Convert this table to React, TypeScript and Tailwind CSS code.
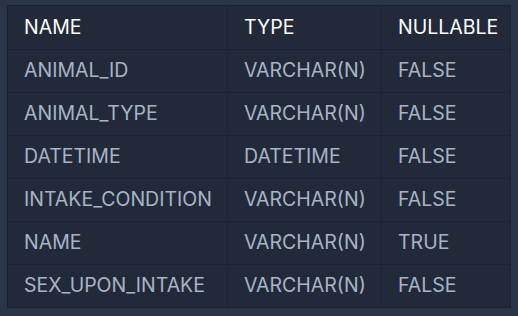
const columns = ['NAME', 'TYPE', 'NULLABLE']

const rows: [string, string, string][] = [
  ['ANIMAL_ID', 'VARCHAR(N)', 'FALSE'],
  ['ANIMAL_TYPE', 'VARCHAR(N)', 'FALSE'],
  ['DATETIME', 'DATETIME', 'FALSE'],
  ['INTAKE_CONDITION', 'VARCHAR(N)', 'FALSE'],
  ['NAME', 'VARCHAR(N)', 'TRUE'],
  ['SEX_UPON_INTAKE', 'VARCHAR(N)', 'FALSE'],
]

export default function App() {
  return (
    <div className="w-[518px] h-[316px] bg-[#2a3547] pt-[5px] pl-[7px] font-['Inter','Liberation_Sans',sans-serif]">
      <table className="w-[503px] border-collapse bg-[#222a3a] text-[19.5px] leading-none table-fixed">
        <colgroup>
          <col className="w-[220px]" />
          <col className="w-[154px]" />
          <col className="w-[129px]" />
        </colgroup>
        <thead>
          <tr className="h-[44px]">
            {columns.map((c) => (
              <th key={c} className="border border-[#1b2231] pl-4 text-left font-normal text-white">
                {c}
              </th>
            ))}
          </tr>
        </thead>
        <tbody>
          {rows.map((r, i) => (
            <tr key={i} className="h-[43px]">
              {r.map((cell, j) => (
                <td key={j} className="border border-[#1b2231] pl-4 text-[#a7b4c6]">
                  {cell}
                </td>
              ))}
            </tr>
          ))}
        </tbody>
      </table>
    </div>
  )
}
